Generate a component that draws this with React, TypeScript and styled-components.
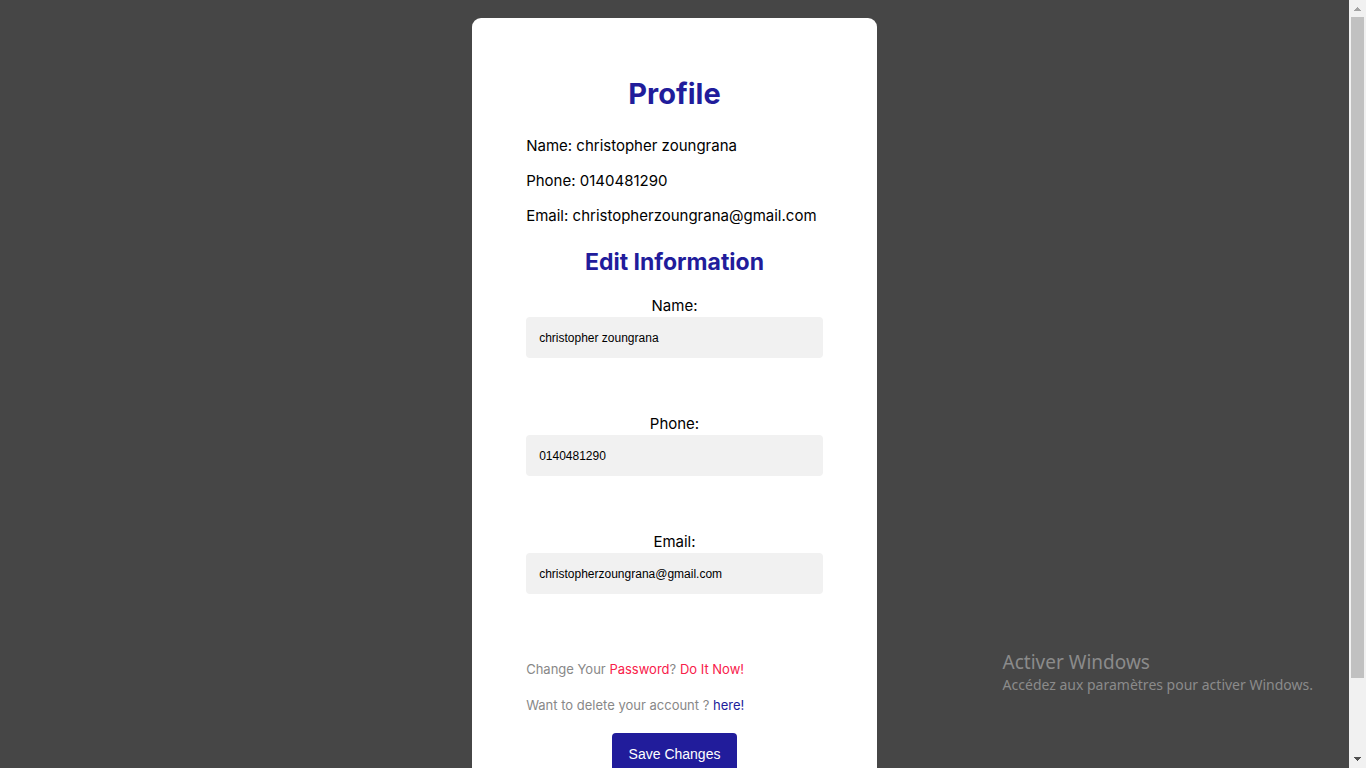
import React from "react";
import styled, { createGlobalStyle } from "styled-components";

const BLUE = "#211c9b";
const RED = "#f8204a";

const GlobalStyle = createGlobalStyle`
  *, *::before, *::after { box-sizing: border-box; }
  body {
    margin: 0;
    background: #464646;
    color: #000;
    font-family: Inter, "Open Sans", sans-serif;
    font-size: 15px;
    font-weight: 400;
  }
`;

const Screen = styled.div`
  position: relative;
  display: flex;
  height: 100vh;
  overflow: hidden;
  background: #464646;
`;

const Page = styled.main`
  flex: 1;
  padding-top: 18px;
`;

const Card = styled.section`
  width: 30%;
  min-width: 404px;
  margin: 0 auto;
  padding: 54px;
  border-radius: 9px;
  background: #fff;
`;

const Title = styled.h1`
  margin: 0 0 19px;
  color: ${BLUE};
  font-size: 29px;
  line-height: 44px;
  font-weight: 700;
  text-align: center;
`;

const Subtitle = styled.h2`
  margin: 18px 0 16px;
  color: ${BLUE};
  font-size: 23px;
  line-height: 34px;
  font-weight: 700;
  text-align: center;
`;

const Details = styled.div`
  display: grid;
  gap: 13px;
`;

const Detail = styled.p`
  margin: 0;
  line-height: 22px;
  white-space: nowrap;
`;

const Form = styled.form`
  display: flex;
  flex-direction: column;
`;

const Field = styled.div`
  display: flex;
  flex-direction: column;
  margin-bottom: 55px;
`;

const Label = styled.label`
  line-height: 22px;
  text-align: center;
`;

const TextInput = styled.input`
  width: 100%;
  height: 41px;
  padding: 0 13px;
  border: 0;
  border-radius: 4px;
  outline: 0;
  background: #f1f1f1;
  color: #000;
  font-family: "Liberation Sans", sans-serif;
  font-size: 12px;
`;

const Notes = styled.div`
  display: grid;
  gap: 16px;
  padding: 10px 0 18px;
`;

const Note = styled.p`
  margin: 0;
  color: #888;
  font-size: 13px;
  line-height: 20px;
`;

const NoteLink = styled.a<{ $color: string }>`
  color: ${(p) => p.$color};
  text-decoration: none;
`;

const SaveButton = styled.button`
  align-self: center;
  height: 42px;
  padding: 0 17px;
  border: 0;
  border-radius: 4px;
  background: ${BLUE};
  color: #fff;
  font-family: "Liberation Sans", sans-serif;
  font-size: 14px;
`;

const Scrollbar = styled.div`
  display: flex;
  flex-direction: column;
  width: 17px;
  padding: 0 2px;
  background: #f1f1f1;
`;

const Arrow = styled.svg`
  display: block;
  width: 13px;
  height: 17px;
`;

const Track = styled.div`
  flex: 1;
`;

const Thumb = styled.div`
  height: 90%;
  background: #c1c1c1;
`;

const Watermark = styled.aside`
  position: absolute;
  right: 53px;
  bottom: 73px;
  color: #8b8b8b;
  font-family: "Noto Sans", sans-serif;
  pointer-events: none;
`;

const WatermarkTitle = styled.div`
  font-size: 19px;
  line-height: 26px;
`;

const WatermarkText = styled.div`
  font-size: 14px;
  line-height: 20px;
`;

const profile = [
  { id: "name", label: "Name", type: "text", value: "christopher zoungrana" },
  { id: "phone", label: "Phone", type: "tel", value: "0140481290" },
  { id: "email", label: "Email", type: "email", value: "christopherzoungrana@gmail.com" },
];

export default function App() {
  return (
    <>
      <GlobalStyle />
      <Screen>
        <Page>
          <Card>
            <Title>Profile</Title>
            <Details>
              {profile.map((item) => (
                <Detail key={item.id}>
                  {item.label}: {item.value}
                </Detail>
              ))}
            </Details>
            <Subtitle>Edit Information</Subtitle>
            <Form onSubmit={(e) => e.preventDefault()}>
              {profile.map((item) => (
                <Field key={item.id}>
                  <Label htmlFor={item.id}>{item.label}:</Label>
                  <TextInput id={item.id} type={item.type} defaultValue={item.value} spellCheck={false} />
                </Field>
              ))}
              <Notes>
                <Note>
                  Change Your <NoteLink href="#password" $color={RED}>Password</NoteLink>?{" "}
                  <NoteLink href="#password" $color={RED}>Do It Now!</NoteLink>
                </Note>
                <Note>
                  Want to delete your account ? <NoteLink href="#delete" $color={BLUE}>here!</NoteLink>
                </Note>
              </Notes>
              <SaveButton type="submit">Save Changes</SaveButton>
            </Form>
          </Card>
        </Page>
        <Scrollbar aria-hidden="true">
          <Arrow viewBox="0 0 13 17" shapeRendering="crispEdges">
            <path d="M6 7h1v1h1v1h1v1h1v1H3v-1h1V9h1V8h1z" fill="#a3a3a3" />
          </Arrow>
          <Track>
            <Thumb />
          </Track>
          <Arrow viewBox="0 0 13 17" shapeRendering="crispEdges">
            <path d="M3 6h7v1H9v1H8v1H7v1H6V9H5V8H4V7H3z" fill="#505050" />
          </Arrow>
        </Scrollbar>
        <Watermark>
          <WatermarkTitle>Activer Windows</WatermarkTitle>
          <WatermarkText>Accédez aux paramètres pour activer Windows.</WatermarkText>
        </Watermark>
      </Screen>
    </>
  );
}
